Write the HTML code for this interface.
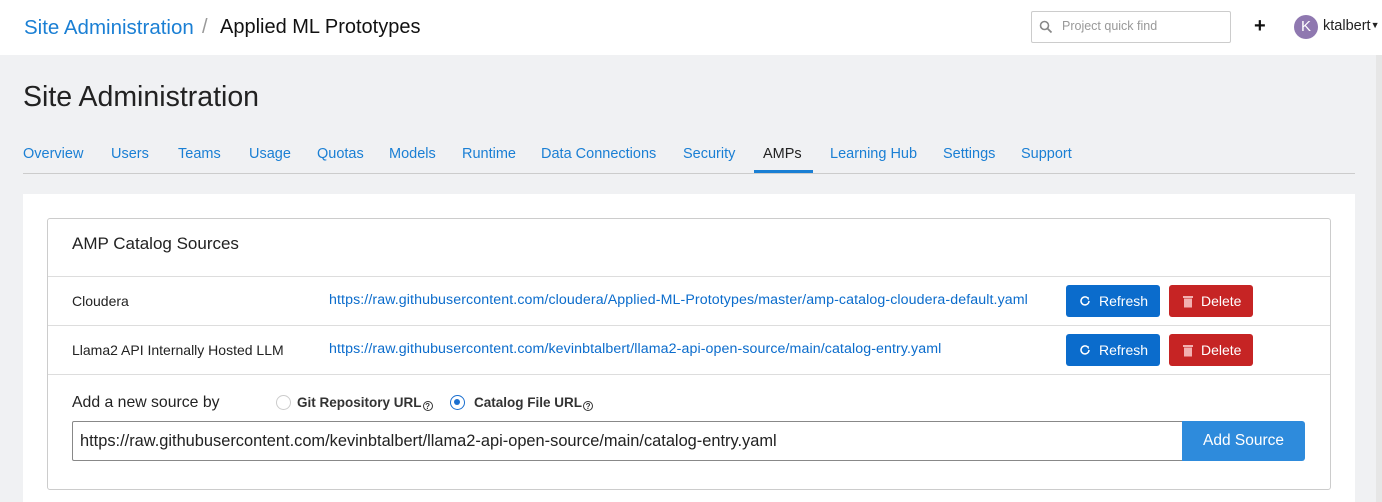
<!DOCTYPE html>
<html><head><meta charset="utf-8"><style>
*{box-sizing:border-box;margin:0;padding:0}
body{width:1382px;height:502px;overflow:hidden;font-family:"Liberation Sans",Arial,sans-serif;background:#f0f1f3;position:relative;color:#222}
.hdr{position:absolute;left:0;top:0;width:1382px;height:55px;background:#fff}
.a{position:absolute;white-space:nowrap}
.nav span{position:absolute;top:146px;font-size:14.5px;color:#1a7fd4}
.btn{position:absolute;height:32px;border-radius:3px;color:#fff;font-size:14px;line-height:32px;padding-left:33px}
.blue{background:#0b6ccc;width:94px}
.red{background:#c62424;width:84px;padding-left:32px}
.link{font-size:13px;color:#0b6ccc;letter-spacing:0.1px}
.rl{font-size:14px;color:#222}
.q{display:inline-block;width:10px;height:10px;border:1px solid #333;border-radius:50%;font-size:8px;line-height:9px;text-align:center;vertical-align:-2px;margin-left:1px}
</style></head><body>
<div class="hdr"></div>
<div class="a" style="left:24px;top:16px;font-size:20.5px;color:#1a7fd4">Site Administration</div>
<div class="a" style="left:202px;top:16px;font-size:20px;color:#999">/</div>
<div class="a" style="left:220px;top:16px;font-size:20px;color:#111">Applied ML Prototypes</div>
<div class="a" style="left:1031px;top:11px;width:200px;height:32px;border:1px solid #ccc;border-radius:2px;background:#fff"></div>
<svg class="a" style="left:1039px;top:20px" width="14" height="14" viewBox="0 0 14 14"><circle cx="5.5" cy="5.5" r="4" fill="none" stroke="#888" stroke-width="1.6"/><path d="M8.5 8.5L12.5 12.5" stroke="#888" stroke-width="1.8"/></svg>
<div class="a" style="left:1062px;top:19px;font-size:12.5px;color:#999">Project quick find</div>
<div class="a" style="left:1254px;top:15px;font-size:20px;font-weight:bold;color:#111">+</div>
<div class="a" style="left:1294px;top:15px;width:24px;height:24px;border-radius:50%;background:#8f78b0;color:#fff;font-size:15px;line-height:24px;text-align:center">K</div>
<div class="a" style="left:1323px;top:18px;font-size:14.5px;color:#222">ktalbert<span style="font-size:9px;vertical-align:2px">▼</span></div>
<div class="a" style="left:1376px;top:55px;width:6px;height:447px;background:#e6e6e6"></div>
<div class="a" style="left:23px;top:81px;font-size:28.5px;color:#222">Site Administration</div>
<div class="nav">
<span style="left:23px">Overview</span><span style="left:111px">Users</span><span style="left:178px">Teams</span><span style="left:249px">Usage</span><span style="left:317px">Quotas</span><span style="left:389px">Models</span><span style="left:462px">Runtime</span><span style="left:541px">Data Connections</span><span style="left:683px">Security</span><span style="left:763px;color:#222">AMPs</span><span style="left:830px">Learning Hub</span><span style="left:943px">Settings</span><span style="left:1021px">Support</span>
</div>
<div class="a" style="left:23px;top:173px;width:1332px;height:1px;background:#ccc"></div>
<div class="a" style="left:754px;top:170px;width:59px;height:3px;background:#1a7fd4"></div>
<div class="a" style="left:23px;top:194px;width:1332px;height:308px;background:#fff"></div>
<div class="a" style="left:47px;top:218px;width:1284px;height:272px;border:1px solid #ccc;border-radius:3px"></div>
<div class="a" style="left:72px;top:234px;font-size:17px;color:#222">AMP Catalog Sources</div>
<div class="a" style="left:48px;top:276px;width:1282px;height:1px;background:#ddd"></div>
<div class="a" style="left:48px;top:325px;width:1282px;height:1px;background:#ddd"></div>
<div class="a" style="left:48px;top:374px;width:1282px;height:1px;background:#ddd"></div>
<div class="a rl" style="left:72px;top:293px">Cloudera</div>
<div class="a link" style="left:329px;top:292px;font-size:14.2px">https://raw.githubusercontent.com/cloudera/Applied-ML-Prototypes/master/amp-catalog-cloudera-default.yaml</div>
<div class="a rl" style="left:72px;top:342px">Llama2 API Internally Hosted LLM</div>
<div class="a link" style="left:329px;top:341px;font-size:14.2px">https://raw.githubusercontent.com/kevinbtalbert/llama2-api-open-source/main/catalog-entry.yaml</div>
<div class="btn blue" style="left:1066px;top:285px">Refresh</div>
<div class="btn red" style="left:1169px;top:285px">Delete</div>
<div class="btn blue" style="left:1066px;top:334px">Refresh</div>
<div class="btn red" style="left:1169px;top:334px">Delete</div>
<svg class="a" style="left:1079px;top:295px" width="12" height="12" viewBox="0 0 12 12"><path d="M10 6A4 4 0 1 1 8.5 2.8" fill="none" stroke="#fff" stroke-width="1.5"/><path d="M7 1.5L10 2.5L9.5 5.5Z" fill="#fff"/></svg>
<svg class="a" style="left:1079px;top:344px" width="12" height="12" viewBox="0 0 12 12"><path d="M10 6A4 4 0 1 1 8.5 2.8" fill="none" stroke="#fff" stroke-width="1.5"/><path d="M7 1.5L10 2.5L9.5 5.5Z" fill="#fff"/></svg>
<svg class="a" style="left:1182px;top:295px" width="12" height="13" viewBox="0 0 12 13"><rect x="1" y="1" width="10" height="2" fill="#f2b0b0"/><rect x="2" y="3.5" width="8" height="9" fill="#f2b0b0"/></svg>
<svg class="a" style="left:1182px;top:344px" width="12" height="13" viewBox="0 0 12 13"><rect x="1" y="1" width="10" height="2" fill="#f2b0b0"/><rect x="2" y="3.5" width="8" height="9" fill="#f2b0b0"/></svg>
<div class="a" style="left:72px;top:394px;font-size:15.8px;color:#222">Add a new source by</div>
<div class="a" style="left:276px;top:395px;width:15px;height:15px;border:1px solid #ccc;border-radius:50%"></div>
<div class="a" style="left:297px;top:395px;font-size:13.5px;font-weight:bold;color:#333">Git Repository URL<span class="q">?</span></div>
<div class="a" style="left:450px;top:395px;width:15px;height:15px;border:1.5px solid #1a6fd0;border-radius:50%"><div style="margin:3px;width:6px;height:6px;border-radius:50%;background:#1a6fd0"></div></div>
<div class="a" style="left:474px;top:395px;font-size:13.5px;font-weight:bold;color:#333">Catalog File URL<span class="q">?</span></div>
<div class="a" style="left:72px;top:421px;width:1111px;height:40px;border:1px solid #888;border-radius:2px 0 0 2px;font-size:16.4px;line-height:38px;padding-left:7px;color:#222">https://raw.githubusercontent.com/kevinbtalbert/llama2-api-open-source/main/catalog-entry.yaml</div>
<div class="a" style="left:1182px;top:421px;width:123px;height:40px;background:#2e8bdc;color:#fff;font-size:15.5px;line-height:40px;text-align:center;border-radius:0 3px 3px 0">Add Source</div>
</body></html>
